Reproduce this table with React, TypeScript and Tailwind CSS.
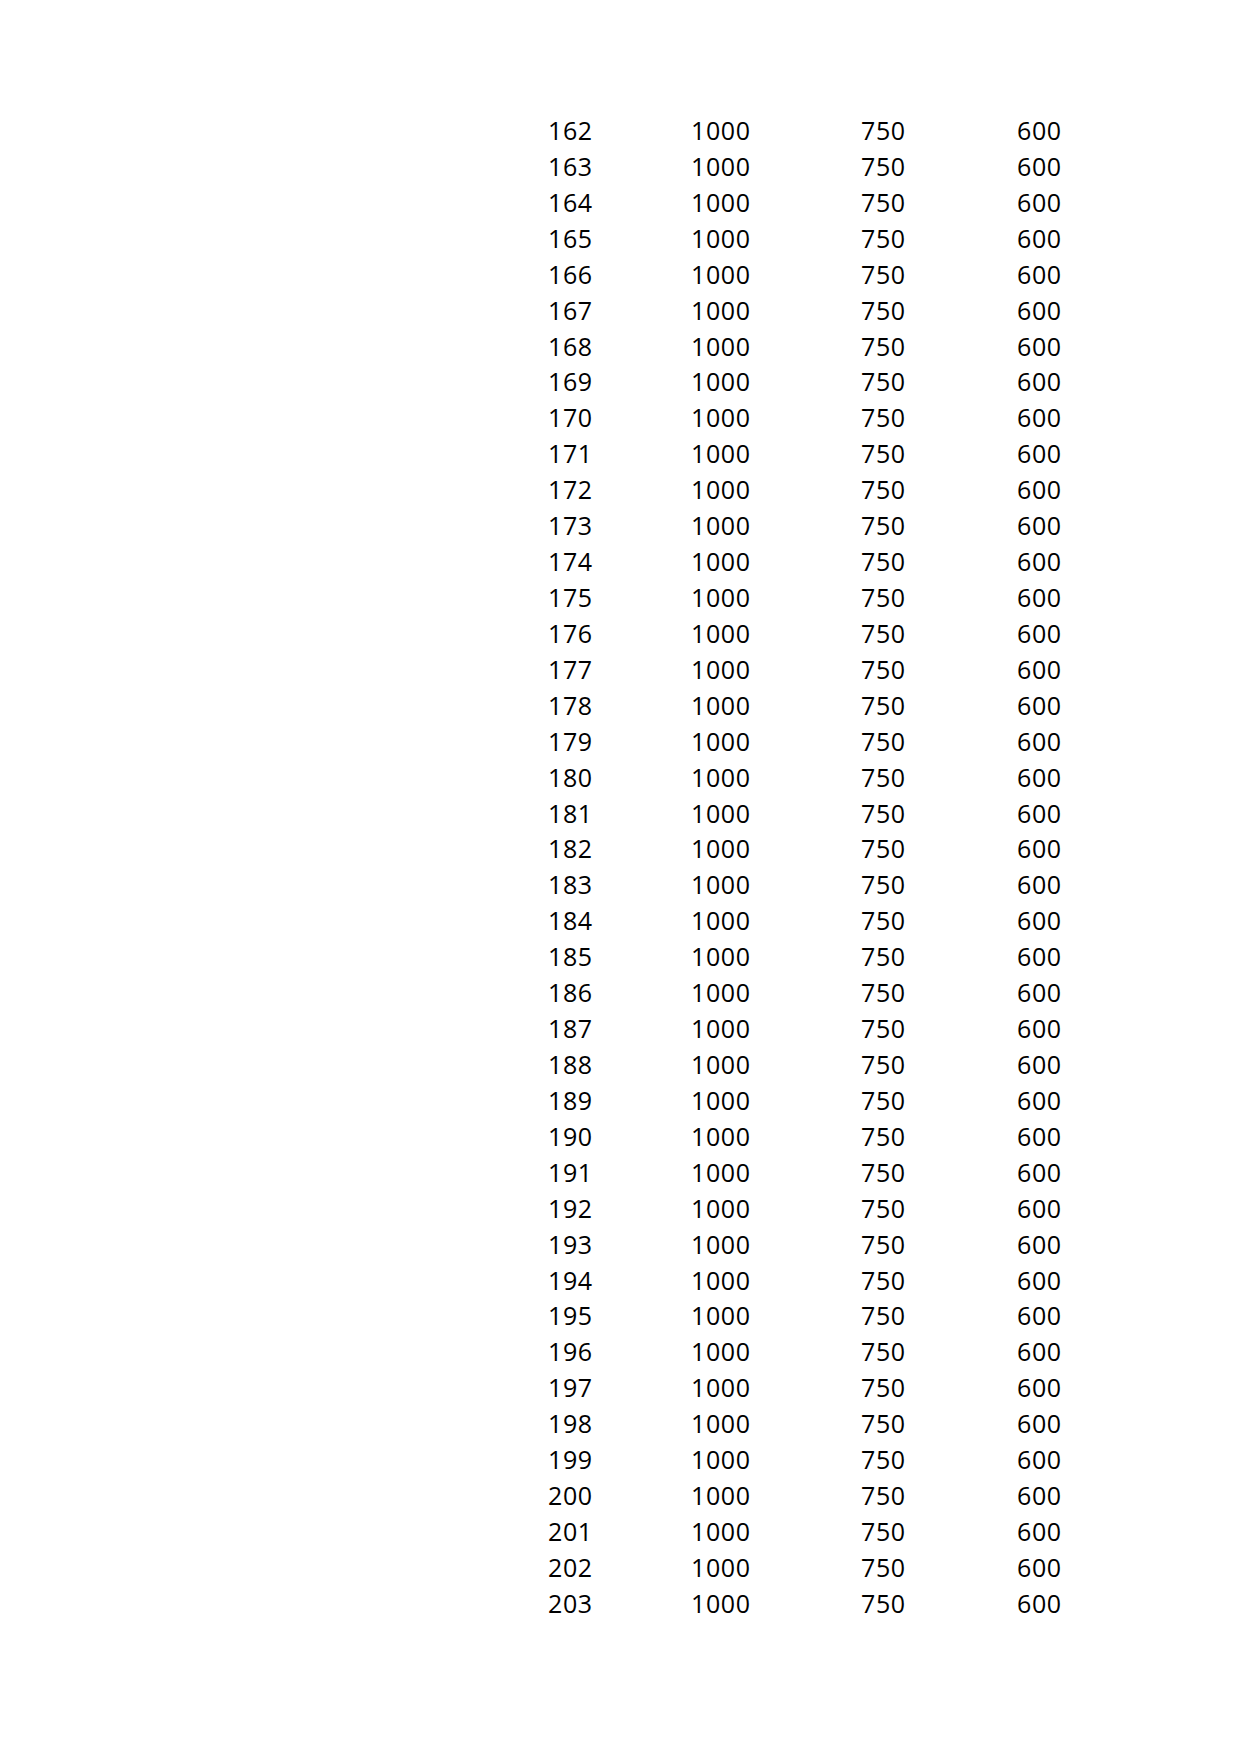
const rows = Array.from({ length: 42 }, (_, i) => 162 + i);

export default function App() {
  return (
    <div
      className="min-h-[1754px] w-[1240px] bg-white text-black"
      style={{ fontFamily: '"Open Sans", "Noto Sans", sans-serif' }}
    >
      <div className="pl-[548px] pt-[113px]">
        {rows.map((n) => (
          <div key={n} className="grid grid-cols-[143px_170px_156px_80px] text-[25px] leading-[35.92px] tracking-[0.6px]">
            <span>{n}</span>
            <span>1000</span>
            <span>750</span>
            <span>600</span>
          </div>
        ))}
      </div>
    </div>
  );
}
